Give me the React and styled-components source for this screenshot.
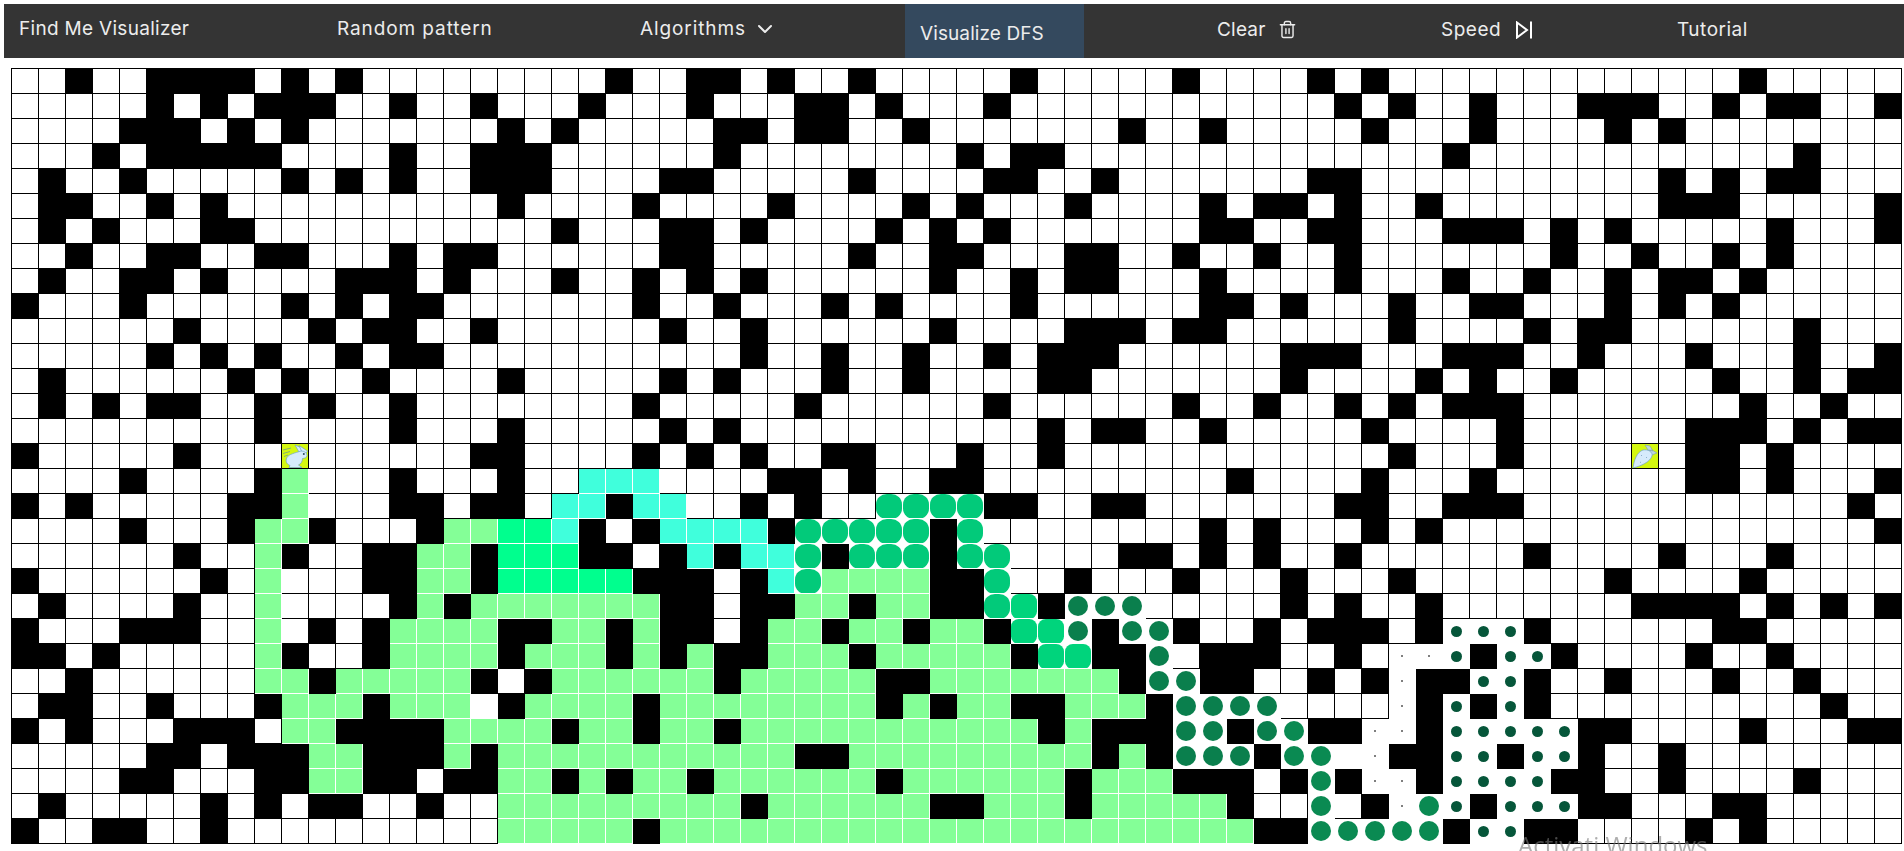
import React from 'react';
import styled, { createGlobalStyle } from 'styled-components';
import { ChevronDown, Trash2 } from 'lucide-react';

const GlobalStyle = createGlobalStyle`
  html, body { margin: 0; padding: 0; background: #fff; overflow: hidden; }
  body { font-family: Inter, "Open Sans", "Liberation Sans", sans-serif; }
`;

const Navbar = styled.nav`
  display: flex;
  align-items: stretch;
  height: 54px;
  margin: 4px 0 0 4px;
  background: #343434;
  color: #ececec;
  font-size: 19px;
`;

const NavItem = styled.div`
  flex: 0 0 ${(p) => p.$w}px;
  box-sizing: border-box;
  display: flex;
  align-items: center;
  gap: ${(p) => p.$gap || 14}px;
  margin-left: ${(p) => p.$skip || 0}px;
  padding: ${(p) => p.$low || 0}px 0 ${(p) => p.$lift || 0}px 15px;
  letter-spacing: ${(p) => p.$track || 0}px;
  background: ${(p) => (p.$active ? '#34495e' : 'transparent')};
`;

const SpeedIcon = styled.svg`
  flex: none;
  width: 16px;
  height: 18px;
  fill: none;
  stroke: #fff;
  stroke-width: 2;
`;

const Board = styled.div`
  display: grid;
  grid-template-columns: repeat(70, 27px);
  grid-auto-rows: 25px;
  width: max-content;
  margin: 10px 0 0 11px;
  border-top: 1px solid #000;
  border-left: 1px solid #000;
`;

const KIND = {
  '.': { bg: '#fff', line: '#000' },
  '#': { bg: '#000', line: '#000' },
  w: { bg: '#fff', line: '#fff' },
  g: { bg: '#84ff97', line: '#fff' },
  b: { bg: '#00ff8e', line: '#fff' },
  c: { bg: '#40ffdc', line: '#fff' },
  m: { bg: '#fff', line: '#fff' },
  n: { bg: '#fff', line: '#fff' },
  d: { bg: '#fff', line: '#fff' },
  D: { bg: '#fff', line: '#fff' },
  e: { bg: '#fff', line: '#fff' },
  s: { bg: '#fff', line: '#fff' },
  S: { bg: '#d4f810', line: '#000' },
  G: { bg: '#d4f810', line: '#000' },
};

const Cell = styled.div`
  box-sizing: border-box;
  display: flex;
  align-items: center;
  justify-content: center;
  overflow: hidden;
  background: ${(p) => KIND[p.$kind].bg};
  border-right: 1px solid ${(p) => KIND[p.$kind].line};
  border-bottom: 1px solid ${(p) => KIND[p.$kind].line};
`;

const DOT = {
  m: { size: 26, h: 25, color: '#02ca7a', radius: '42%' },
  n: { size: 26, h: 25, color: '#00d47c', radius: '30%' },
  d: { size: 20, h: 20, color: '#0a7f4d', radius: '50%' },
  D: { size: 20, h: 20, color: '#0a8a52', radius: '50%' },
  e: { size: 11, h: 11, color: '#06563a', radius: '50%' },
  s: { size: 2, h: 2, color: '#555', radius: '50%' },
};

const Dot = styled.span`
  flex: none;
  width: ${(p) => DOT[p.$kind].size}px;
  height: ${(p) => DOT[p.$kind].h}px;
  border-radius: ${(p) => DOT[p.$kind].radius};
  background: ${(p) => DOT[p.$kind].color};
`;

const Marker = styled.svg`
  display: block;
  width: 26px;
  height: 24px;
`;

const Watermark = styled.div`
  position: fixed;
  left: 1518px;
  top: 828px;
  font-family: "Open Sans", sans-serif;
  font-size: 24px;
  color: rgba(120, 120, 120, 0.6);
  white-space: nowrap;
`;

const SPEC = [
  { '#': '2 5-8 10 12 22 25-26 28 31 37 43 48 50 64' },
  { '#': '5 7 9-11 14 17 21 25 29-30 32 36 49 51 54 58-60 63 65-66 69' },
  { '#': '4-6 8 10 18 20 26-27 29-30 33 41 44 50 54 59 61' },
  { '#': '3 5-9 14 17-19 26 35 37-38 53 66' },
  { '#': '1 4 10 12 14 17-19 24-25 31 36-37 40 48-49 61 63 65-66' },
  { '#': '1-2 5 7 18 23 28 33 35 39 44 46-47 49 52 61-63 69' },
  { '#': '1 3 7-8 20 24-25 27 32 34 36 44-45 48-49 53-55 57 59 65 69' },
  { '#': '2 5-6 9-10 14 16-17 24-25 31 34-35 39-40 43 46 49 57 60 63 65' },
  { '#': '1 4-5 7 12-14 16 20 23 25 27 34 37 39-40 44 49 53 56 59 61-62 64' },
  { '#': '0 4 10 12 14-15 23 26 30 32 37 44-45 47 51 54-55 59 61 63' },
  { '#': '6 11 13-14 17 24 27 34 39-41 43-44 51 56 58-59 66' },
  { '#': '5 7 9 12 14-15 27 30 33 36 38-40 47-49 53-55 58 62 66 69' },
  { '#': '1 8 10 13 18 24 26 30 33 38-39 47 52 54 57 63 66 68-69' },
  { '#': '1 3 5-6 9 11 14 23 29 36 43 46 49 51 53-55 64 67' },
  { '#': '9 14 18 24 26 38 40-41 44 50 55 62-64 66 68-69' },
  { '#': '0 6 17-18 23 25 27 30-31 35 38 51 55 62-63 65', S: '10', G: '60' },
  { '#': '4 9 14 18 28-29 31 34-35 45 50 54 62-63 65 69', g: '10', c: '21-23' },
  { '#': '0 2 8-9 14-15 17-18 22 27 29 36-37 40-41 49-50 53-55 68', g: '10', c: '20-21 23-24', m: '32-35' },
  { '#': '4 8 11 15 21 23 28 34 44 46 50 52 69', g: '9-10 16-17', b: '18-19', c: '20 24-27', m: '29-33 35' },
  { '#': '6 10 13-14 17 21-22 24 26 30 34 41-42 44 46 49 56 61 65', g: '9 15-16', b: '18-20', c: '25 27-28', m: '29 31-33 35-36' },
  { '#': '0 7 13-14 17 23-25 27 34-35 39 43 47 51 59 64', g: '9 15-16 30-33', b: '18-22', c: '28', m: '29 36' },
  { '#': '1 6 14 16 24-25 27-28 31 34-35 38 47 49 52 60-63 65 67 69', g: '9 15 17-23 29-30 32-33', m: '36', n: '37', d: '39-41' },
  { '#': '0 4-6 11 13 18-19 22 24-25 27 30 33 36 40 43 46 48-50 52 56 63-64', g: '9 14-17 20-21 23 28-29 31-32 34-35', n: '37-38', d: '39 41-42', e: '53-55' },
  { '#': '0-1 3 10 13 18 22 24 26-27 31 37 40-41 44-46 49 54 57 62 65', g: '9 14-17 19-21 23 25 28-30 32-36', n: '38-39', d: '42', s: '51-52', e: '53 55-56' },
  { '#': '2 11 17 19 26 32-33 41 44-45 48 50 52-53 56 59 63 66', g: '9-10 12-16 20-25 27-31 34-40', d: '42-43', s: '51', e: '54-55' },
  { '#': '1-2 5 9 13 18 23 32 34 37-38 42 52 54 56 67', g: '10-12 14-16 19-22 24-31 33 35-36 39-41', d: '43-46', s: '51', e: '53 55', w: '17' },
  { '#': '0 2 6-8 12-15 20 23 26 38 40-42 45 48-49 52 58-59 64 68-69', g: '10-11 16-19 21-22 24-25 27-37 39', d: '43-44 46', D: '47', s: '50-51', e: '53-57' },
  { '#': '5-6 8-10 13-15 17 29-30 40 42 46 51-52 55 58 61', g: '11-12 16 18-28 31-39 41', d: '43-45', D: '47-48', s: '50', e: '53-54 56-57', w: '49' },
  { '#': '4-5 9-10 13-14 16-17 20 22 25 32 39 43-45 47 49 52 57-58 61 66', g: '11-12 18-19 21 23-24 26-31 33-38 40-42', D: '48', s: '50-51', e: '53-56' },
  { '#': '1 7 9 11-12 15 27 34-35 39 45 50 54 58-59 63-64', g: '18-26 28-33 36-38 40-44', D: '48 52', s: '51', e: '53 55-57' },
  { '#': '0 3-4 7 23 46-47 53 56-57 62 64', g: '18-22 24-45', D: '48-52', e: '54-55' },
];

function buildRow(spec) {
  const row = Array(70).fill('.');
  Object.entries(spec).forEach(([kind, list]) => {
    list.split(' ').forEach((part) => {
      const [a, b] = part.split('-').map(Number);
      for (let i = a; i <= (b === undefined ? a : b); i += 1) row[i] = kind;
    });
  });
  return row;
}

const Rabbit = () => (
  <Marker viewBox="0 0 26 24">
    <g stroke="#6fa4c4" strokeWidth="0.7" fill="#d6ebfb">
      <path d="M13 1 L21 4.5 L21 9 L17 8 Z" />
      <path d="M17 1.5 L25.5 7 L23.5 10 L20 8 Z" />
      <path d="M19 7 C22.5 7 25 9 25 11.5 C25 13.5 22.5 14.5 20.5 14.5 C20.5 18 18.5 20 16.5 21 L20 23.5 L7 23.5 L8 21.5 C4.5 20 3 17 5 13.5 C7 10 13 9 19 7 Z" />
    </g>
    <circle cx="21.8" cy="10" r="1" fill="#2c4a5e" />
    <path d="M1 6 L9 4 M1 9.5 L8 7.5 M2 12.5 L6 11" stroke="#6f9a90" strokeWidth="0.8" fill="none" />
  </Marker>
);

const Carrot = () => (
  <Marker viewBox="0 0 26 24">
    <path d="M14 7 L20 6 L25 9 L20 11 Z M13 1 L18 2 L21 7 L16 6 Z" fill="#bcd6dc" stroke="#7fa0a8" strokeWidth="0.6" />
    <path d="M1 24 C2 16 5 8 11 6 C16 5 21 8 20 12 C18 18 9 22 1 24 Z" fill="#d6ebfb" stroke="#6fa4c4" strokeWidth="0.7" />
    <path d="M9 11 L10 12 M14 13 L15 14 M8 18 L9 18.6" stroke="#6f9ab8" strokeWidth="0.7" />
  </Marker>
);

const App = () => (
  <>
    <GlobalStyle />
    <Navbar>
      <NavItem $w={318} $lift={5} $track={0.3}>Find Me Visualizer</NavItem>
      <NavItem $w={303} $lift={5} $track={0.9}>Random pattern</NavItem>
      <NavItem $w={280} $lift={5} $track={0.9} $gap={7}>
        Algorithms
        <ChevronDown size={24} strokeWidth={2} />
      </NavItem>
      <NavItem $w={179} $active $low={5} $track={0.1}>Visualize DFS</NavItem>
      <NavItem $w={224} $skip={118} $lift={3} $track={0.2} $gap={12}>
        Clear
        <Trash2 size={19} strokeWidth={1.8} />
      </NavItem>
      <NavItem $w={236} $lift={3} $track={0.5} $gap={15}>
        Speed
        <SpeedIcon viewBox="0 0 16 18">
          <polygon points="1,1.5 11,9 1,16.5" />
          <line x1="15" y1="0.5" x2="15" y2="17.5" />
        </SpeedIcon>
      </NavItem>
      <NavItem $w={242} $lift={3} $track={0.5}>Tutorial</NavItem>
    </Navbar>
    <Board>
      {SPEC.flatMap((spec, r) =>
        buildRow(spec).map((kind, c) => (
          <Cell key={`${r}-${c}`} $kind={kind}>
            {DOT[kind] && <Dot $kind={kind} />}
            {kind === 'S' && <Rabbit />}
            {kind === 'G' && <Carrot />}
          </Cell>
        )),
      )}
    </Board>
    <Watermark>Activati Windows</Watermark>
  </>
);

export default App;
